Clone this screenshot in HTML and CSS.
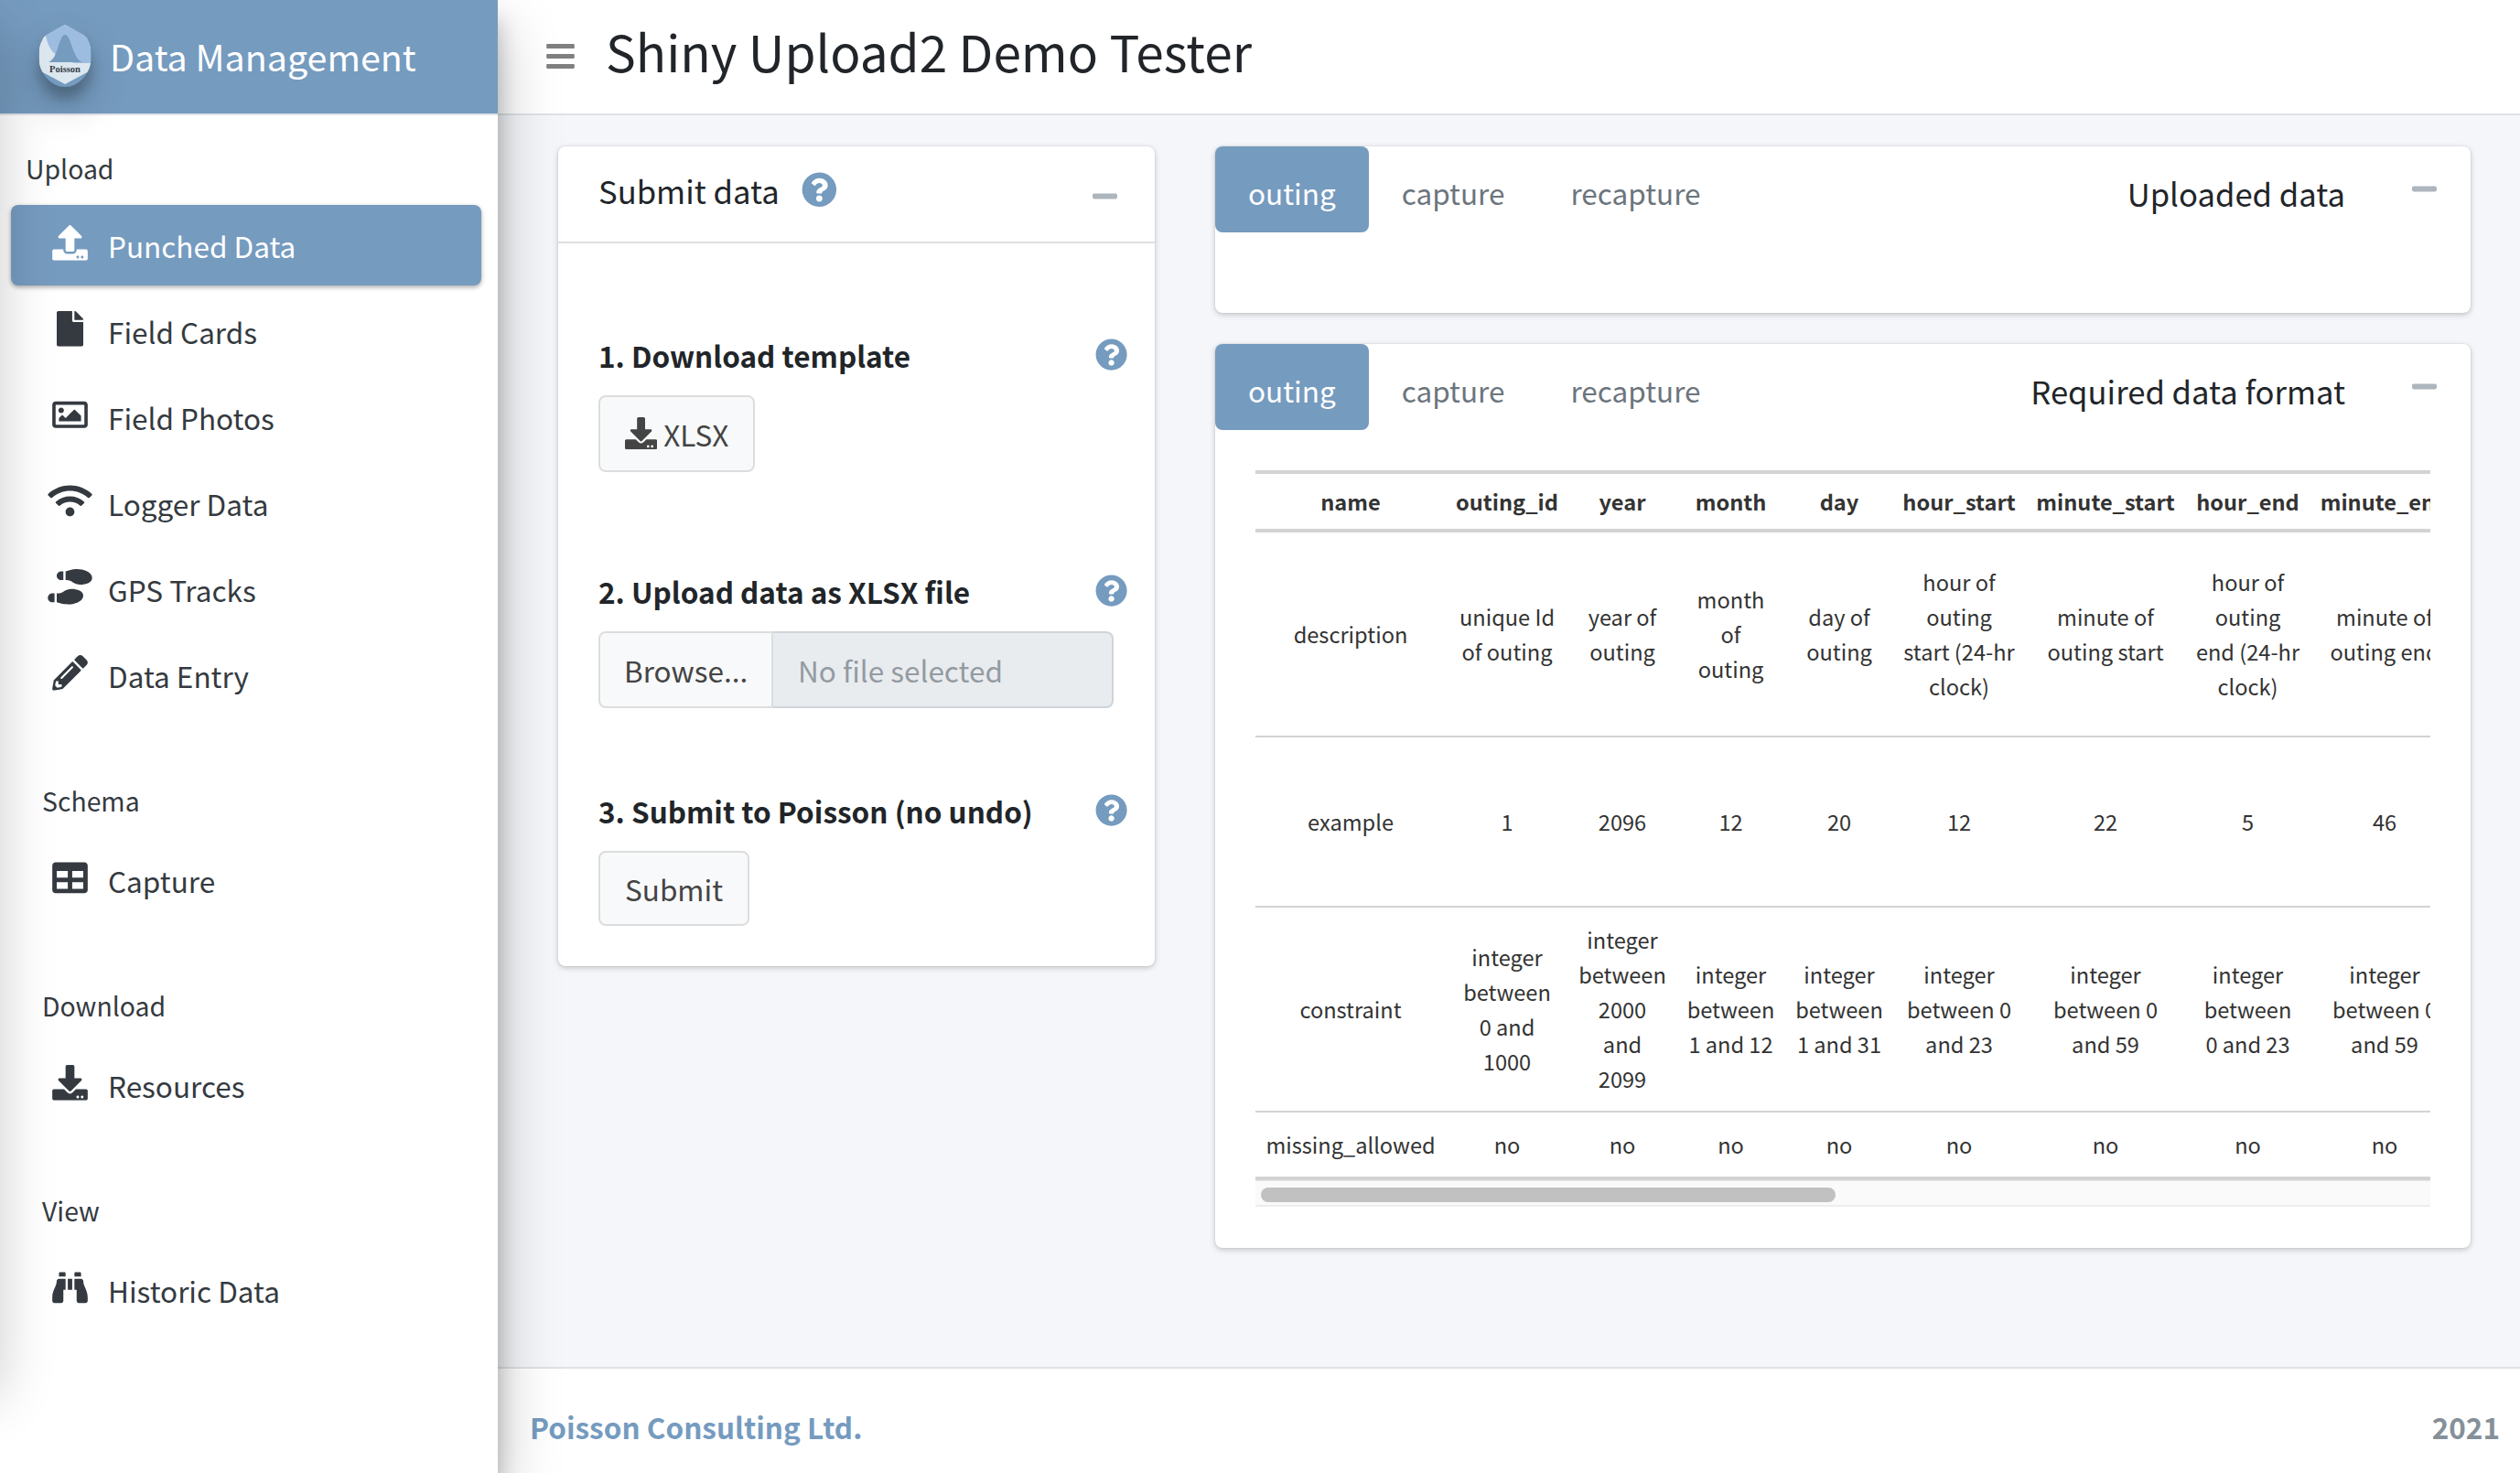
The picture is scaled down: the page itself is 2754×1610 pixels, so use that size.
FILE: index.html
```html
<!DOCTYPE html>
<html lang="en">
<head>
<meta charset="utf-8">
<title>Shiny Upload2 Demo Tester</title>
<link rel="stylesheet" href="styles.css">
</head>
<body>
<svg class="sprite" aria-hidden="true">
  <symbol id="upload" viewBox="0 0 512 512"><path d="M296 384h-80c-13.3 0-24-10.7-24-24V192h-87.7c-17.8 0-26.7-21.5-14.1-34.1L242.3 5.7c7.5-7.5 19.8-7.5 27.3 0l152.2 152.2c12.6 12.6 3.7 34.1-14.1 34.1H320v168c0 13.3-10.7 24-24 24zm216-8v112c0 13.3-10.7 24-24 24H24c-13.3 0-24-10.7-24-24V376c0-13.3 10.7-24 24-24h136v8c0 30.9 25.1 56 56 56h80c30.9 0 56-25.1 56-56v-8h136c13.3 0 24 10.7 24 24zm-124 88c0-11-9-20-20-20s-20 9-20 20 9 20 20 20 20-9 20-20zm64 0c0-11-9-20-20-20s-20 9-20 20 9 20 20 20 20-9 20-20z"/></symbol>
  <symbol id="download" viewBox="0 0 512 512"><path d="M216 0h80c13.3 0 24 10.7 24 24v168h87.7c17.8 0 26.7 21.5 14.1 34.1L269.7 378.3c-7.5 7.5-19.8 7.5-27.3 0L90.1 226.1c-12.6-12.6-3.7-34.1 14.1-34.1H192V24c0-13.3 10.7-24 24-24zm296 376v112c0 13.3-10.7 24-24 24H24c-13.3 0-24-10.7-24-24V376c0-13.3 10.7-24 24-24h146.7l49 49c20.1 20.1 52.5 20.1 72.6 0l49-49H488c13.3 0 24 10.7 24 24zm-124 88c0-11-9-20-20-20s-20 9-20 20 9 20 20 20 20-9 20-20zm64 0c0-11-9-20-20-20s-20 9-20 20 9 20 20 20 20-9 20-20z"/></symbol>
  <symbol id="file" viewBox="0 0 384 512"><path d="M224 136V0H24C10.7 0 0 10.7 0 24v464c0 13.3 10.7 24 24 24h336c13.3 0 24-10.7 24-24V160H248c-13.2 0-24-10.8-24-24zm160-14.1v6.1H256V0h6.1c6.4 0 12.5 2.5 17 7l97.9 98c4.5 4.5 7 10.6 7 16.9z"/></symbol>
  <symbol id="image" viewBox="0 0 512 512"><path d="M464 64H48C21.49 64 0 85.49 0 112v288c0 26.51 21.49 48 48 48h416c26.51 0 48-21.49 48-48V112c0-26.51-21.49-48-48-48zm-6 336H54a6 6 0 0 1-6-6V118a6 6 0 0 1 6-6h404a6 6 0 0 1 6 6v276a6 6 0 0 1-6 6zM128 152c-22.091 0-40 17.909-40 40s17.909 40 40 40 40-17.909 40-40-17.909-40-40-40zM96 352h320v-80l-87.515-87.515c-4.686-4.686-12.284-4.686-16.971 0L192 304l-39.515-39.515c-4.686-4.686-12.284-4.686-16.971 0L96 304v48z"/></symbol>
  <symbol id="wifi" viewBox="0 0 640 512"><path d="M634.91 154.88C457.74-8.99 182.19-8.93 5.09 154.88c-6.66 6.16-6.79 16.59-.35 22.98l34.24 33.97c6.14 6.1 16.02 6.23 22.4.38 145.92-133.68 371.3-133.71 517.25 0 6.38 5.85 16.26 5.71 22.4-.38l34.24-33.97c6.43-6.39 6.3-16.82-.36-22.98zM320 352c-35.35 0-64 28.65-64 64s28.65 64 64 64 64-28.65 64-64-28.65-64-64-64zm202.67-83.59c-115.26-101.93-290.21-101.82-405.34 0-6.9 6.1-7.12 16.69-.57 23.15l34.44 33.99c6 5.92 15.66 6.32 22.05.8 83.95-72.57 209.74-72.41 293.49 0 6.39 5.52 16.05 5.13 22.05-.8l34.44-33.99c6.56-6.46 6.33-17.06-.56-23.15z"/></symbol>
  <symbol id="prints" viewBox="0 0 640 512"><path d="M192 160h32V32h-32c-35.35 0-64 28.65-64 64s28.65 64 64 64zM0 416c0 35.35 28.65 64 64 64h32V352H64c-35.35 0-64 28.65-64 64zm337.46-128c-34.91 0-76.16 13.12-104.73 32-24.79 16.38-44.52 32-104.73 32v128l57.53 15.97c26.21 7.28 53.01 13.12 80.31 15.05 32.69 2.31 65.6.67 97.58-6.2C472.9 481.3 512 429.22 512 384c0-64-84.18-96-174.54-96zM491.42 7.19C459.44.32 426.53-1.33 393.84.99c-27.3 1.93-54.1 7.77-80.31 15.04L256 32v128c60.2 0 79.94 15.62 104.73 32 28.57 18.88 69.82 32 104.73 32C555.82 224 640 192 640 128c0-45.22-39.1-97.3-148.58-120.81z"/></symbol>
  <symbol id="pencil" viewBox="0 0 512 512"><path d="M497.9 142.1l-46.1 46.1c-4.7 4.7-12.3 4.7-17 0l-111-111c-4.7-4.7-4.7-12.3 0-17l46.1-46.1c18.7-18.7 49.1-18.7 67.9 0l60.1 60.1c18.8 18.7 18.8 49.1 0 67.9zM284.2 99.8L21.6 362.4.4 483.9c-2.9 16.4 11.4 30.6 27.8 27.8l121.5-21.3 262.6-262.6c4.7-4.7 4.7-12.3 0-17l-111-111c-4.8-4.7-12.4-4.7-17.1 0zM124.1 339.9c-5.5-5.5-5.5-14.3 0-19.8l154-154c5.5-5.5 14.3-5.5 19.8 0s5.5 14.3 0 19.8l-154 154c-5.5 5.5-14.3 5.5-19.8 0zM88 424h48v36.3l-64.5 11.3-31.1-31.1L51.7 376H88v48z"/></symbol>
  <symbol id="table" viewBox="0 0 512 512"><path d="M464 32H48C21.49 32 0 53.49 0 80v352c0 26.51 21.49 48 48 48h416c26.51 0 48-21.49 48-48V80c0-26.51-21.49-48-48-48zM224 416H64v-96h160v96zm0-160H64v-96h160v96zm224 160H288v-96h160v96zm0-160H288v-96h160v96z"/></symbol>
  <symbol id="binoculars" viewBox="0 0 512 512"><path d="M416 48c0-8.84-7.16-16-16-16h-64c-8.84 0-16 7.16-16 16v48h96V48zM63.91 159.99C61.4 253.84 3.46 274.22 0 404v44c0 17.67 14.33 32 32 32h96c17.67 0 32-14.33 32-32V288h32V128H95.84c-17.63 0-31.45 14.37-31.93 31.99zm384.18 0c-.48-17.62-14.3-31.99-31.93-31.99H320v160h32v160c0 17.67 14.33 32 32 32h96c17.67 0 32-14.33 32-32v-44c-3.46-129.78-61.4-150.16-63.91-244.01zM176 32h-64c-8.84 0-16 7.16-16 16v48h96V48c0-8.84-7.16-16-16-16zm48 256h64V128h-64v160z"/></symbol>
  <symbol id="help" viewBox="0 0 512 512"><path d="M504 256c0 136.997-111.043 248-248 248S8 392.997 8 256C8 119.083 119.043 8 256 8s248 111.083 248 248zM262.655 90c-54.497 0-89.255 22.957-116.549 63.758-3.536 5.286-2.353 12.415 2.715 16.258l34.699 26.31c5.205 3.947 12.621 3.008 16.665-2.122 17.864-22.658 30.113-35.797 57.303-35.797 20.429 0 45.698 13.148 45.698 32.958 0 14.976-12.363 22.667-32.534 33.976C247.128 238.528 216 254.941 216 296v4c0 6.627 5.373 12 12 12h56c6.627 0 12-5.373 12-12v-1.333c0-28.462 83.186-29.647 83.186-106.667 0-58.002-60.165-102-116.531-102zM256 338c-25.365 0-46 20.635-46 46 0 25.364 20.635 46 46 46s46-20.636 46-46c0-25.364-20.635-46-46-46z"/></symbol>
  <symbol id="minus" viewBox="0 0 448 512"><path d="M416 208H32c-17.67 0-32 14.33-32 32v32c0 17.67 14.33 32 32 32h384c17.67 0 32-14.33 32-32v-32c0-17.67-14.33-32-32-32z"/></symbol>
  <symbol id="bars" viewBox="0 0 448 512"><path d="M16 132h416c8.837 0 16-7.163 16-16V76c0-8.837-7.163-16-16-16H16C7.163 60 0 67.163 0 76v40c0 8.837 7.163 16 16 16zm0 160h416c8.837 0 16-7.163 16-16v-40c0-8.837-7.163-16-16-16H16c-8.837 0-16 7.163-16 16v40c0 8.837 7.163 16 16 16zm0 160h416c8.837 0 16-7.163 16-16v-40c0-8.837-7.163-16-16-16H16c-8.837 0-16 7.163-16 16v40c0 8.837 7.163 16 16 16z"/></symbol>
</svg>

<div class="app">
  <aside class="sidebar">
    <div class="brand">
      <svg class="logo" viewBox="0 0 58 68">
        <path fill="#dde7f0" d="M29 0 57 16V50L29 65 1 50V16Z"/>
        <path fill="#9dbde0" d="M29 0 57 16V42H40C20 38 11 28 8 12Z"/>
        <path fill="#759bbf" d="M11 41C22 37 22 11 29 11S37 37 48 41Z"/>
        <text x="29" y="52" text-anchor="middle">Poisson</text>
      </svg>
      <span>Data Management</span>
    </div>
    <nav class="nav">
      <div class="nav-header first">Upload</div>
      <a class="nav-link active"><svg class="icon"><use href="#upload"/></svg>Punched Data</a>
      <a class="nav-link"><svg class="icon"><use href="#file"/></svg>Field Cards</a>
      <a class="nav-link"><svg class="icon"><use href="#image"/></svg>Field Photos</a>
      <a class="nav-link"><svg class="icon"><use href="#wifi"/></svg>Logger Data</a>
      <a class="nav-link"><svg class="icon"><use href="#prints"/></svg>GPS Tracks</a>
      <a class="nav-link"><svg class="icon"><use href="#pencil"/></svg>Data Entry</a>
      <div class="nav-header">Schema</div>
      <a class="nav-link"><svg class="icon"><use href="#table"/></svg>Capture</a>
      <div class="nav-header">Download</div>
      <a class="nav-link"><svg class="icon"><use href="#download"/></svg>Resources</a>
      <div class="nav-header">View</div>
      <a class="nav-link"><svg class="icon"><use href="#binoculars"/></svg>Historic Data</a>
    </nav>
  </aside>

  <div class="page">
    <header class="topbar">
      <svg class="bars"><use href="#bars"/></svg>
      <h1>Shiny Upload2 Demo Tester</h1>
    </header>

    <main class="content">
      <section class="card submit-card">
        <div class="card-header">
          <h2>Submit data</h2>
          <svg class="help big"><use href="#help"/></svg>
          <svg class="minus"><use href="#minus"/></svg>
        </div>
        <div class="card-body">
          <div class="step">
            <div class="step-title">1. Download template<svg class="help"><use href="#help"/></svg></div>
            <button class="btn"><svg class="btn-icon"><use href="#download"/></svg>XLSX</button>
          </div>
          <div class="step">
            <div class="step-title">2. Upload data as XLSX file<svg class="help"><use href="#help"/></svg></div>
            <div class="file-input"><span class="browse">Browse...</span><span class="file-name">No file selected</span></div>
          </div>
          <div class="step">
            <div class="step-title">3. Submit to Poisson (no undo)<svg class="help"><use href="#help"/></svg></div>
            <button class="btn submit">Submit</button>
          </div>
        </div>
      </section>

      <div class="column">
        <section class="card uploaded-card">
          <div class="tabs">
            <a class="tab active">outing</a><a class="tab">capture</a><a class="tab">recapture</a>
            <h2>Uploaded data</h2>
            <svg class="minus"><use href="#minus"/></svg>
          </div>
        </section>

        <section class="card format-card">
          <div class="tabs">
            <a class="tab active">outing</a><a class="tab">capture</a><a class="tab">recapture</a>
            <h2>Required data format</h2>
            <svg class="minus"><use href="#minus"/></svg>
          </div>
          <div class="table-wrap">
            <table>
              <colgroup><col class="c-name"><col class="c-id"><col class="c-year"><col class="c-month"><col class="c-day"><col class="c-hs"><col class="c-ms"><col class="c-he"><col class="c-me"></colgroup>
              <thead>
                <tr><th>name</th><th>outing_id</th><th>year</th><th>month</th><th>day</th><th>hour_start</th><th>minute_start</th><th>hour_end</th><th>minute_end</th></tr>
              </thead>
              <tbody>
                <tr class="r-desc"><td>description</td><td>unique Id<br>of outing</td><td>year of<br>outing</td><td>month<br>of<br>outing</td><td>day of<br>outing</td><td>hour of<br>outing<br>start (24-hr<br>clock)</td><td>minute of<br>outing start</td><td>hour of<br>outing<br>end (24-hr<br>clock)</td><td>minute of<br>outing end</td></tr>
                <tr class="r-ex"><td>example</td><td>1</td><td>2096</td><td>12</td><td>20</td><td>12</td><td>22</td><td>5</td><td>46</td></tr>
                <tr class="r-con"><td>constraint</td><td>integer<br>between<br>0 and<br>1000</td><td>integer<br>between<br>2000<br>and<br>2099</td><td>integer<br>between<br>1 and 12</td><td>integer<br>between<br>1 and 31</td><td>integer<br>between 0<br>and 23</td><td>integer<br>between 0<br>and 59</td><td>integer<br>between<br>0 and 23</td><td>integer<br>between 0<br>and 59</td></tr>
                <tr class="r-miss"><td>missing_allowed</td><td>no</td><td>no</td><td>no</td><td>no</td><td>no</td><td>no</td><td>no</td><td>no</td></tr>
              </tbody>
            </table>
            <div class="scrollbar"><div class="thumb"></div></div>
          </div>
        </section>
      </div>
    </main>

    <footer class="footer"><a>Poisson Consulting Ltd.</a><span>2021</span></footer>
  </div>
</div>
</body>
</html>
```

FILE: styles.css
```css
* { box-sizing: border-box; }

body {
  margin: 0;
  font-family: "Noto Sans CJK SC", "Noto Sans", sans-serif;
  font-size: 31.5px;
  line-height: 48px;
  color: #212529;
  background: #f4f6f9;
}

h1, h2 { margin: 0; font-weight: 400; }
svg { display: block; fill: currentColor; flex: none; }
.sprite { display: none; }

.app { display: flex; width: 2754px; height: 1610px; overflow: hidden; }

/* Sidebar */
.sidebar {
  position: relative;
  z-index: 2;
  flex: none;
  width: 544px;
  height: 1610px;
  background: #fff;
  box-shadow: 0 31px 62px rgba(0, 0, 0, .25), 0 22px 22px rgba(0, 0, 0, .22);
}
.sidebar::after {
  content: "";
  position: absolute;
  left: -100px;
  top: 0;
  width: 100px;
  height: 1494px;
  box-shadow: 0 31px 62px rgba(0, 0, 0, .2);
}
.brand {
  display: flex;
  align-items: center;
  height: 126px;
  padding: 0 0 2px 42px;
  gap: 20px;
  background: #759bbf;
  background-clip: padding-box;
  border-bottom: 2px solid #dee2e6;
  color: #fff;
  font-size: 39.4px;
}
.logo {
  width: 58px;
  height: 68px;
  border-radius: 50%;
  box-shadow: 0 22px 44px rgba(0, 0, 0, .19), 0 13px 13px rgba(0, 0, 0, .23);
}
.logo text { font: 700 10.5px "Liberation Serif", serif; fill: #333a45; }

.nav { display: flex; flex-direction: column; padding: 0 18px 0 12px; color: #343a40; }
.nav-header { height: 88px; padding: 21px 0 0 34px; margin-top: 36px; font-size: 28.4px; line-height: 60px; margin-bottom: 6px; }
.nav-header.first { height: 98px; padding: 28px 0 0 16px; margin: 0; }
.nav-link {
  display: flex;
  align-items: center;
  height: 88px;
  margin-bottom: 6px;
  padding: 0 0 0 40px;
  gap: 17px;
  border-radius: 8px;
}
.nav-link.active {
  background: #759bbf;
  color: #fff;
  box-shadow: 0 2px 6px rgba(0, 0, 0, .12), 0 2px 4px rgba(0, 0, 0, .24);
}
.icon { width: 49px; height: 38.7px; margin-top: -5px; }

/* Page shell */
.page { flex: 1; display: flex; flex-direction: column; min-width: 0; }
.topbar {
  display: flex;
  align-items: center;
  height: 126px;
  padding: 0 0 2px 53px;
  background: #fff;
  border-bottom: 2px solid #dee2e6;
}
.bars { width: 31px; height: 35px; color: #808080; }
.topbar h1 { margin: -12px 0 0 34px; font-size: 55px; line-height: 70px; }
.content { flex: 1; display: flex; align-items: flex-start; padding: 34px 54px 0 66px; gap: 66px; }
.footer {
  display: flex;
  align-items: center;
  justify-content: space-between;
  height: 116px;
  padding: 12px 22px 0 35px;
  background: #fff;
  border-top: 2px solid #dee2e6;
  font-weight: 700;
  color: #869099;
}
.footer a { color: #759bbf; }

/* Cards */
.card {
  background: #fff;
  border-radius: 8px;
  box-shadow: 0 0 2px rgba(0, 0, 0, .125), 0 2px 6px rgba(0, 0, 0, .2);
}
.card h2 { font-size: 34.65px; }
.column { flex: 1; display: flex; flex-direction: column; gap: 34px; }
.minus { width: 27px; height: 31px; color: #adb5bd; }
.help { width: 35.2px; height: 35.2px; color: #759bbf; }
.help.big { width: 38.7px; height: 38.7px; }

.submit-card { width: 652px; height: 896px; }
.card-header {
  display: flex;
  align-items: center;
  height: 106px;
  padding: 0 41px 8px 44px;
  border-bottom: 2px solid #dfdfdf;
}
.card-header .help { margin-left: 24px; margin-top: -1px; }
.card-header .minus { margin: 12px 0 0 auto; }
.card-body { padding: 98px 30px 0 44px; }
.step { height: 258px; }
.step:nth-child(2) { height: 240px; }
.step-title { display: flex; justify-content: space-between; align-items: center; height: 48px; margin-bottom: 20px; font-weight: 700; }
.btn {
  display: flex;
  align-items: center;
  height: 84px;
  padding: 0 27px;
  gap: 7px;
  border: 2px solid #ddd;
  border-radius: 8px;
  background: #f8f9fa;
  color: #444;
  font: inherit;
}
.btn.submit { height: 82px; }
.btn-icon { width: 35.2px; height: 35.2px; }
.file-input { display: flex; width: 563px; height: 84px; line-height: 80px; }
.browse { width: 191px; padding-left: 26px; border: 2px solid #ddd; border-radius: 8px 0 0 8px; background: #f8f9fa; color: #444; }
.file-name { flex: 1; padding-left: 27px; border: 2px solid #ced4da; border-left: 0; border-radius: 0 8px 8px 0; background: #e9ecef; color: #939ba2; }

.uploaded-card { height: 182px; }
.format-card { height: 988px; }
.tabs { display: flex; height: 94px; align-items: center; padding-right: 37px; }
.tab { height: 94px; padding: 0 36px; line-height: 100px; color: #6c757d; border-radius: 8px; }
.tab.active { background: #759bbf; color: #fff; }
.tabs h2 { margin: 8px 73px 0 auto; }
.tabs .minus { margin-top: -1px; }

/* Data format table */
.table-wrap { width: 1284px; margin: 44px 0 0 44px; overflow: hidden; }
table {
  width: 1316px;
  table-layout: fixed;
  border-collapse: separate;
  border-spacing: 0;
  border-top: 4px solid #d3d3d3;
  font-size: 23.6px;
  line-height: 38px;
  color: #333;
  text-align: center;
}
th, td { padding: 0; vertical-align: middle; white-space: nowrap; }
th { height: 64px; border-bottom: 4px solid #d3d3d3; }
td { border-bottom: 2px solid #d3d3d3; }
.r-desc td { height: 224px; }
.r-ex td { height: 186px; }
.r-con td { height: 224px; }
.r-miss td { height: 74px; border-bottom: 4px solid #d3d3d3; }
.c-name { width: 208px; }
.c-id { width: 134px; }
.c-year { width: 118px; }
.c-month { width: 119px; }
.c-day { width: 118px; }
.c-hs { width: 144px; }
.c-ms { width: 176px; }
.c-he { width: 135px; }
.c-me { width: 164px; }
.scrollbar { height: 29px; padding: 7px 6px 0; background: #fafafa; border-top: 1px solid #e6e6e6; border-bottom: 2px solid #ededed; }
.thumb { width: 628px; height: 16px; border-radius: 8px; background: #c1c1c1; }
```
